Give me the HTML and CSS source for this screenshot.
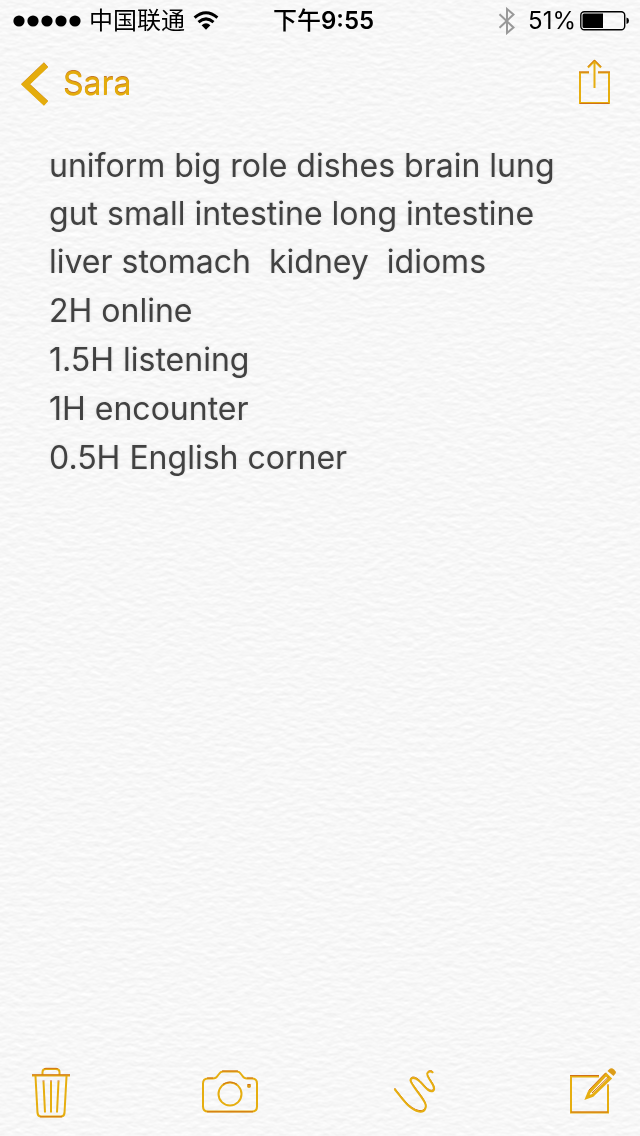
FILE: index.html
```html
<!DOCTYPE html>
<html lang="en">
<head>
<meta charset="utf-8">
<meta name="viewport" content="width=device-width, initial-scale=1">
<title>Notes</title>
<link rel="stylesheet" href="styles.css">
</head>
<body>
<svg class="paper" aria-hidden="true">
  <filter id="grain" x="0" y="0" width="100%" height="100%" color-interpolation-filters="sRGB">
    <feTurbulence type="fractalNoise" baseFrequency="0.11 0.2" numOctaves="3" seed="8" result="noise"/>
    <feDiffuseLighting in="noise" lighting-color="#ffffff" surfaceScale="0.14" diffuseConstant="1.12">
      <feDistantLight azimuth="270" elevation="60"/>
    </feDiffuseLighting>
  </filter>
  <rect width="100%" height="100%" filter="url(#grain)"/>
</svg>
<div class="app">
  <div class="status">
    <div class="status-left">
      <svg width="68" height="12" viewBox="0 0 68 12" aria-hidden="true"><circle cx="6" cy="6" r="5.6"/><circle cx="20" cy="6" r="5.6"/><circle cx="34" cy="6" r="5.6"/><circle cx="48" cy="6" r="5.6"/><circle cx="62" cy="6" r="5.6"/></svg>
      <span class="carrier" lang="zh">中国联通</span>
      <svg class="wifi" width="26" height="20" viewBox="0 0 26 20" aria-hidden="true"><path d="M1.6 6.7Q13-3.3 24.4 6.7M5.5 11.1Q13 4.7 20.5 11.1" fill="none" stroke="#000" stroke-width="3"/><path d="M8.6 14.2Q13 10.2 17.4 14.2L13 18.7Z"/></svg>
    </div>
    <div class="time" lang="zh"><span class="period">下午</span>9:55</div>
    <div class="status-right">
      <svg class="bluetooth" width="18" height="28" viewBox="0 0 18 28" aria-hidden="true"><path d="M1.500 7.200 15.500 20.500 9 26V2l6.500 5.500L1.500 20.800"/></svg>
      <span class="percent">51%</span>
      <svg width="50" height="20" viewBox="0 0 50 20" aria-hidden="true"><rect x=".8" y=".8" width="43.900" height="18" rx="3.500" fill="none" stroke="#000" stroke-width="1.400"/><path d="M4 2.500H23V17H4Q2.500 17 2.500 15.500V4Q2.500 2.500 4 2.500ZM46.500 6.500Q49 7 49 9.800T46.500 13Z"/></svg>
    </div>
  </div>
  <header class="nav">
    <a class="back" href="#folder">
      <svg width="28" height="44" viewBox="0 0 28 44" aria-hidden="true"><path d="M25 2.500 4.500 22 25 41" class="edge"/><path d="M25 3 4.500 22.500 25 41.500" class="chevron"/></svg>
      <span>Sara</span>
    </a>
    <button class="tool" type="button" aria-label="Share">
      <svg width="32" height="48" viewBox="0 0 32 48"><path d="M11 12.500H2V43H31V12.500H20M16.500 28V1M10 7.500 16.500 1 23 7.500"/><path class="shade" d="M1 12H11M20 12H32M2 43.500H31M10 6.500 16.500 0 23 6.500"/></svg>
    </button>
  </header>
  <main class="note">
    <p>uniform big role dishes brain lung gut small intestine long intestine liver stomach&nbsp; kidney&nbsp; idioms</p>
    <p>2H online</p>
    <p>1.5H listening</p>
    <p>1H encounter</p>
    <p>0.5H English corner</p>
  </main>
  <footer class="toolbar">
    <button class="tool" type="button" aria-label="Delete">
      <svg width="38" height="52" viewBox="0 0 38 52"><path d="M0 9.500H38M3.500 10.500 5.500 47Q6 50.500 9 50.500H29Q32 50.500 32.500 47L34.500 10.500M10.500 9V6Q10.500 3 14 3H24Q27.500 3 27.500 6V9M11.500 15.500 13 46.500M19 15.500V46.500M26.500 15.500 25 46.500"/><path class="shade" d="M0 8.800H38M12 3Q12.500 2.300 14 2.300H24Q25.500 2.300 26 3M10.500 15H12.500M18 15H20M25.500 15H27.500M8 50.800H30"/></svg>
    </button>
    <button class="tool" type="button" aria-label="Camera">
      <svg width="58" height="44" viewBox="0 0 58 44"><path d="M6 8.500H11Q14 8.500 15.500 6L17 4Q18.500 1.500 21 1.500H35Q37.500 1.500 39 4L40.500 6Q42 8.500 45 8.500H50Q55 8.500 55 13.500V36.500Q55 41.500 50 41.500H6Q1 41.500 1 36.500V13.500Q1 8.500 6 8.500Z"/><circle cx="28" cy="24" r="11.500"/><circle class="dot" cx="47" cy="16" r="2"/><path class="shade" d="M5 8H11M20 1H36M45 8H51M5 41.800H51M21 14.300Q28 9.800 35 14.300M45.500 14.500H48.500"/></svg>
    </button>
    <button class="tool" type="button" aria-label="Sketch">
      <svg width="44" height="44" viewBox="0 0 44 44"><path class="shade" d="M1.500 18C9 27 16 38.500 26 40.500 32 41.500 34.500 36 31.500 31 28 24 19 15 17.500 9.500 17.500 6 22 6.500 25 9 31 13.500 35 22 40 20 45 16 32 6 34.500 2 36 0 39 0 40 2"/><path d="M1.500 19C9 28 16 39.500 26 41.500 32 42.500 34.500 37 31.500 32 28 25 19 16 17.500 10.500 17.500 7 22 7.500 25 10 31 14.500 35 23 40 21 45 17 32 7 34.500 3 36 1 39 1 40 3"/></svg>
    </button>
    <button class="tool" type="button" aria-label="New note">
      <svg width="48" height="48" viewBox="0 0 48 48"><path d="M30 8.500H2V44.500H39V17.500"/><path class="shade" d="M1 7.500H30M2 44H39M38 17H40"/><path class="pencil" d="M37 6.500 41 10.500 23.500 27.500 18 29.500 20 24.500Z"/><path class="shade" d="M23 25 39.500 9M36.500 5 19.500 22.500"/><path class="dot" d="M38.500 3 40.500 1Q42.500-.5 45 1.500T46.500 5.500L44.500 8Z"/></svg>
    </button>
  </footer>
</div>
</body>
</html>
```
FILE: styles.css
```css
* { box-sizing: border-box; }

body {
  margin: 0;
  background: #f8f8f8;
  color: #414141;
  font-family: Inter, "Noto Sans CJK SC", sans-serif;
}

.paper {
  position: fixed;
  inset: 0;
  width: 100%;
  height: 100%;
  z-index: -1;
}

svg { display: block; flex: none; }

.app {
  display: flex;
  flex-direction: column;
  min-height: 100vh;
}

.status {
  display: grid;
  grid-template-columns: 1fr auto 1fr;
  align-items: center;
  height: 42px;
  padding: 0 10px 0 13px;
  color: #000;
  font-size: 24px;
  line-height: 42px;
}

.status-left,
.status-right {
  display: flex;
  align-items: center;
}

.status-left { gap: 8px; }
.status-right { justify-content: flex-end; gap: 4px; }

.bluetooth {
  margin-right: 8px;
  fill: none;
  stroke: #999;
  stroke-width: 2;
}

.time {
  padding-left: 4px;
  font-weight: 600;
}

.period { font-weight: 500; }

.nav {
  display: flex;
  align-items: center;
  justify-content: space-between;
  height: 86px;
  padding: 0 30px 2px 21px;
}

.back {
  display: flex;
  align-items: center;
  gap: 14px;
  color: #e4ac0c;
  font-size: 32px;
  line-height: 44px;
  text-decoration: none;
  text-shadow: 0 -1px 0 #c87a28;
}

.chevron,
.edge {
  fill: none;
  stroke: #e4ac0c;
  stroke-width: 6;
}

.edge { stroke: #c8862c; }

.tool {
  padding: 0;
  border: 0;
  background: none;
  cursor: pointer;
}

.tool svg {
  overflow: visible;
  fill: none;
  stroke: #e6ae10;
  stroke-width: 2;
}

.tool .shade {
  stroke: #d07018;
  stroke-width: 1;
}

.tool .dot {
  fill: #dc9c18;
  stroke: none;
}

.tool .pencil { stroke-width: 3; }

.note {
  display: flex;
  flex: 1;
  flex-direction: column;
  gap: 1px;
  padding: 14px 49px;
  font-size: 32px;
  line-height: 48px;
  text-shadow: 0 0 3px #d4d4d4, 0 2px 1px #fff;
}

.note p { margin: 0; }

.toolbar {
  display: flex;
  align-items: center;
  justify-content: space-between;
  height: 88px;
  padding: 0 23px 0 32px;
}
```
